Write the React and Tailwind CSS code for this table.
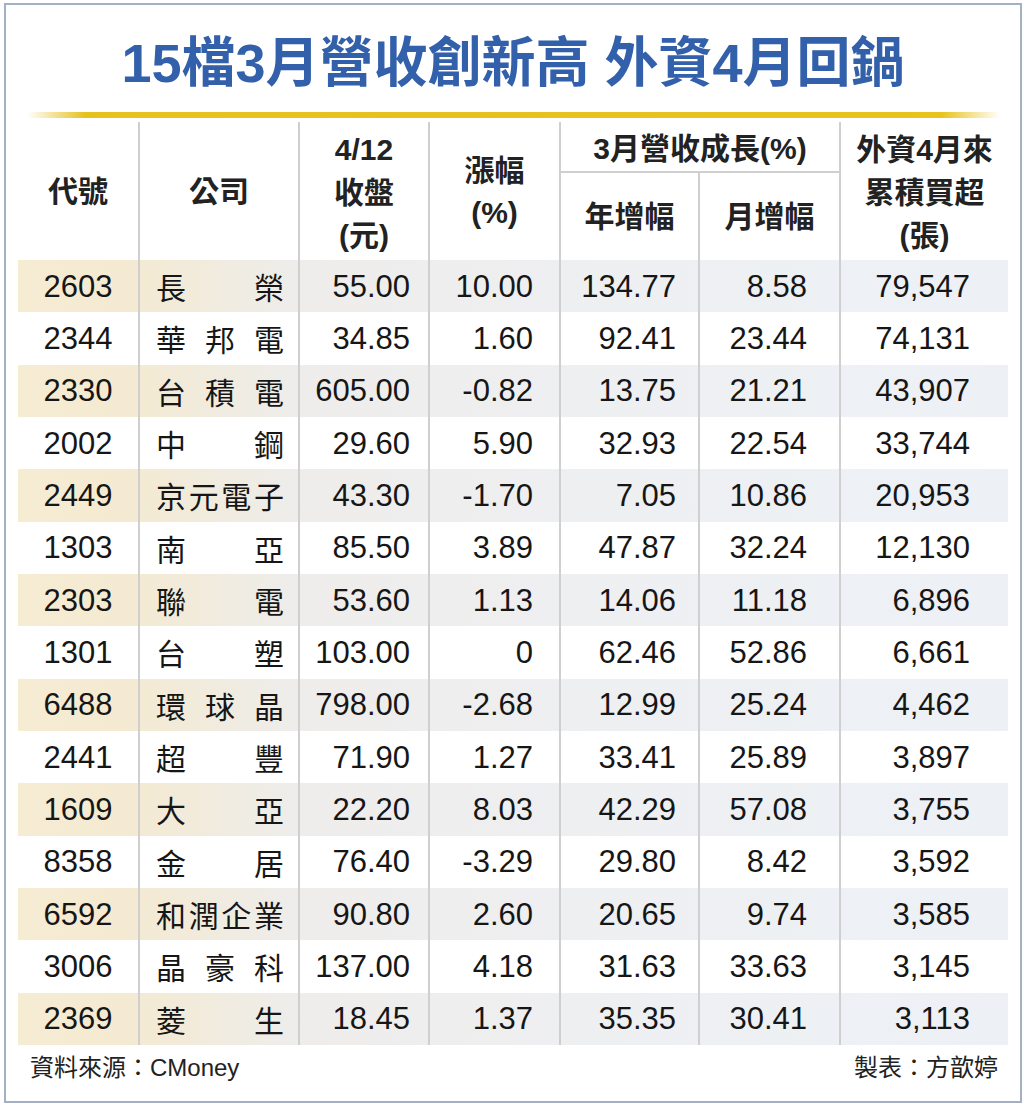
import React from 'react';

const rows = [
  ['2603', '長榮', '55.00', '10.00', '134.77', '8.58', '79,547'],
  ['2344', '華邦電', '34.85', '1.60', '92.41', '23.44', '74,131'],
  ['2330', '台積電', '605.00', '-0.82', '13.75', '21.21', '43,907'],
  ['2002', '中鋼', '29.60', '5.90', '32.93', '22.54', '33,744'],
  ['2449', '京元電子', '43.30', '-1.70', '7.05', '10.86', '20,953'],
  ['1303', '南亞', '85.50', '3.89', '47.87', '32.24', '12,130'],
  ['2303', '聯電', '53.60', '1.13', '14.06', '11.18', '6,896'],
  ['1301', '台塑', '103.00', '0', '62.46', '52.86', '6,661'],
  ['6488', '環球晶', '798.00', '-2.68', '12.99', '25.24', '4,462'],
  ['2441', '超豐', '71.90', '1.27', '33.41', '25.89', '3,897'],
  ['1609', '大亞', '22.20', '8.03', '42.29', '57.08', '3,755'],
  ['8358', '金居', '76.40', '-3.29', '29.80', '8.42', '3,592'],
  ['6592', '和潤企業', '90.80', '2.60', '20.65', '9.74', '3,585'],
  ['3006', '晶豪科', '137.00', '4.18', '31.63', '33.63', '3,145'],
  ['2369', '菱生', '18.45', '1.37', '35.35', '30.41', '3,113'],
];

const cols = 'grid grid-cols-[120px_160px_130px_131px_139px_141px_169px]';
const line = 'border-l-2 border-[#cfcfcf]';

const App = () => {
  return (
    <div className="w-[1024px] h-[1105px] bg-white pt-[3px] pl-[4px] font-['Liberation_Sans','Noto_Sans_CJK_TC',sans-serif] text-[#161616]">
      <div className="w-[1018px] h-[1100px] border-2 border-[#a3afc2] bg-white flex flex-col">
        <h1 className="h-[107px] pt-[8px] flex items-center justify-center text-[54px] leading-none font-semibold text-[#3260aa]">
          15檔3月營收創新高 外資4月回鍋
        </h1>
        <div className="h-[6px] ml-[21px] mr-[20px] bg-[linear-gradient(to_right,rgba(232,194,30,0)_0%,#e6c120_6%,#e8c31d_94%,rgba(232,194,30,0)_100%)]" />

        <div className="mt-[4px] px-[12px]">
          <div className={`${cols} grid-rows-[51px_87px] text-[30px] font-semibold text-[#222] text-center`}>
            <div className="row-span-2 flex items-center justify-center">代號</div>
            <div className={`row-span-2 flex items-center justify-center ${line}`}>公司</div>
            <div className={`row-span-2 flex flex-col items-center justify-center leading-[43px] pt-[2px] ${line}`}>
              <span>4/12</span>
              <span>收盤</span>
              <span>(元)</span>
            </div>
            <div className={`row-span-2 flex flex-col items-center justify-center leading-[42px] pt-[2px] ${line}`}>
              <span>漲幅</span>
              <span>(%)</span>
            </div>
            <div className={`col-span-2 flex items-center justify-center pt-[4px] border-b-2 ${line}`}>3月營收成長(%)</div>
            <div className={`row-span-2 flex flex-col items-center justify-center leading-[43px] pt-[2px] ${line}`}>
              <span>外資4月來</span>
              <span>累積買超</span>
              <span>(張)</span>
            </div>
            <div className={`flex items-center justify-center ${line}`}>年增幅</div>
            <div className={`flex items-center justify-center ${line}`}>月增幅</div>
          </div>

          {rows.map((r, i) => (
            <div
              key={r[0]}
              className={`${cols} h-[52.33px] text-[31px] leading-none ${
                i % 2 === 0
                  ? 'bg-[linear-gradient(to_right,#f6ecd2_0%,#f4ead3_12%,#eeedeb_28%,#eeeff1_55%,#edf1f6_100%)]'
                  : 'bg-white'
              }`}
            >
              <div className="flex items-center justify-center">{r[0]}</div>
              <div className={`flex items-center justify-between pl-[16px] pr-[14px] font-['Noto_Sans_CJK_TC',sans-serif] text-[30px] ${line}`}>
                {r[1].split('').map((c, j) => (
                  <span key={j}>{c}</span>
                ))}
              </div>
              <div className={`flex items-center justify-end pr-[18px] ${line}`}>{r[2]}</div>
              <div className={`flex items-center justify-end pr-[26px] ${line}`}>{r[3]}</div>
              <div className={`flex items-center justify-end pr-[22px] ${line}`}>{r[4]}</div>
              <div className={`flex items-center justify-end pr-[32px] ${line}`}>{r[5]}</div>
              <div className={`flex items-center justify-end pr-[38px] ${line}`}>{r[6]}</div>
            </div>
          ))}
        </div>

        <footer className="flex justify-between pt-[10px] pl-[24px] pr-[22px] text-[24px] leading-[26px] text-[#222]">
          <span>資料來源：CMoney</span>
          <span>製表：方歆婷</span>
        </footer>
      </div>
    </div>
  );
};

export default App;
